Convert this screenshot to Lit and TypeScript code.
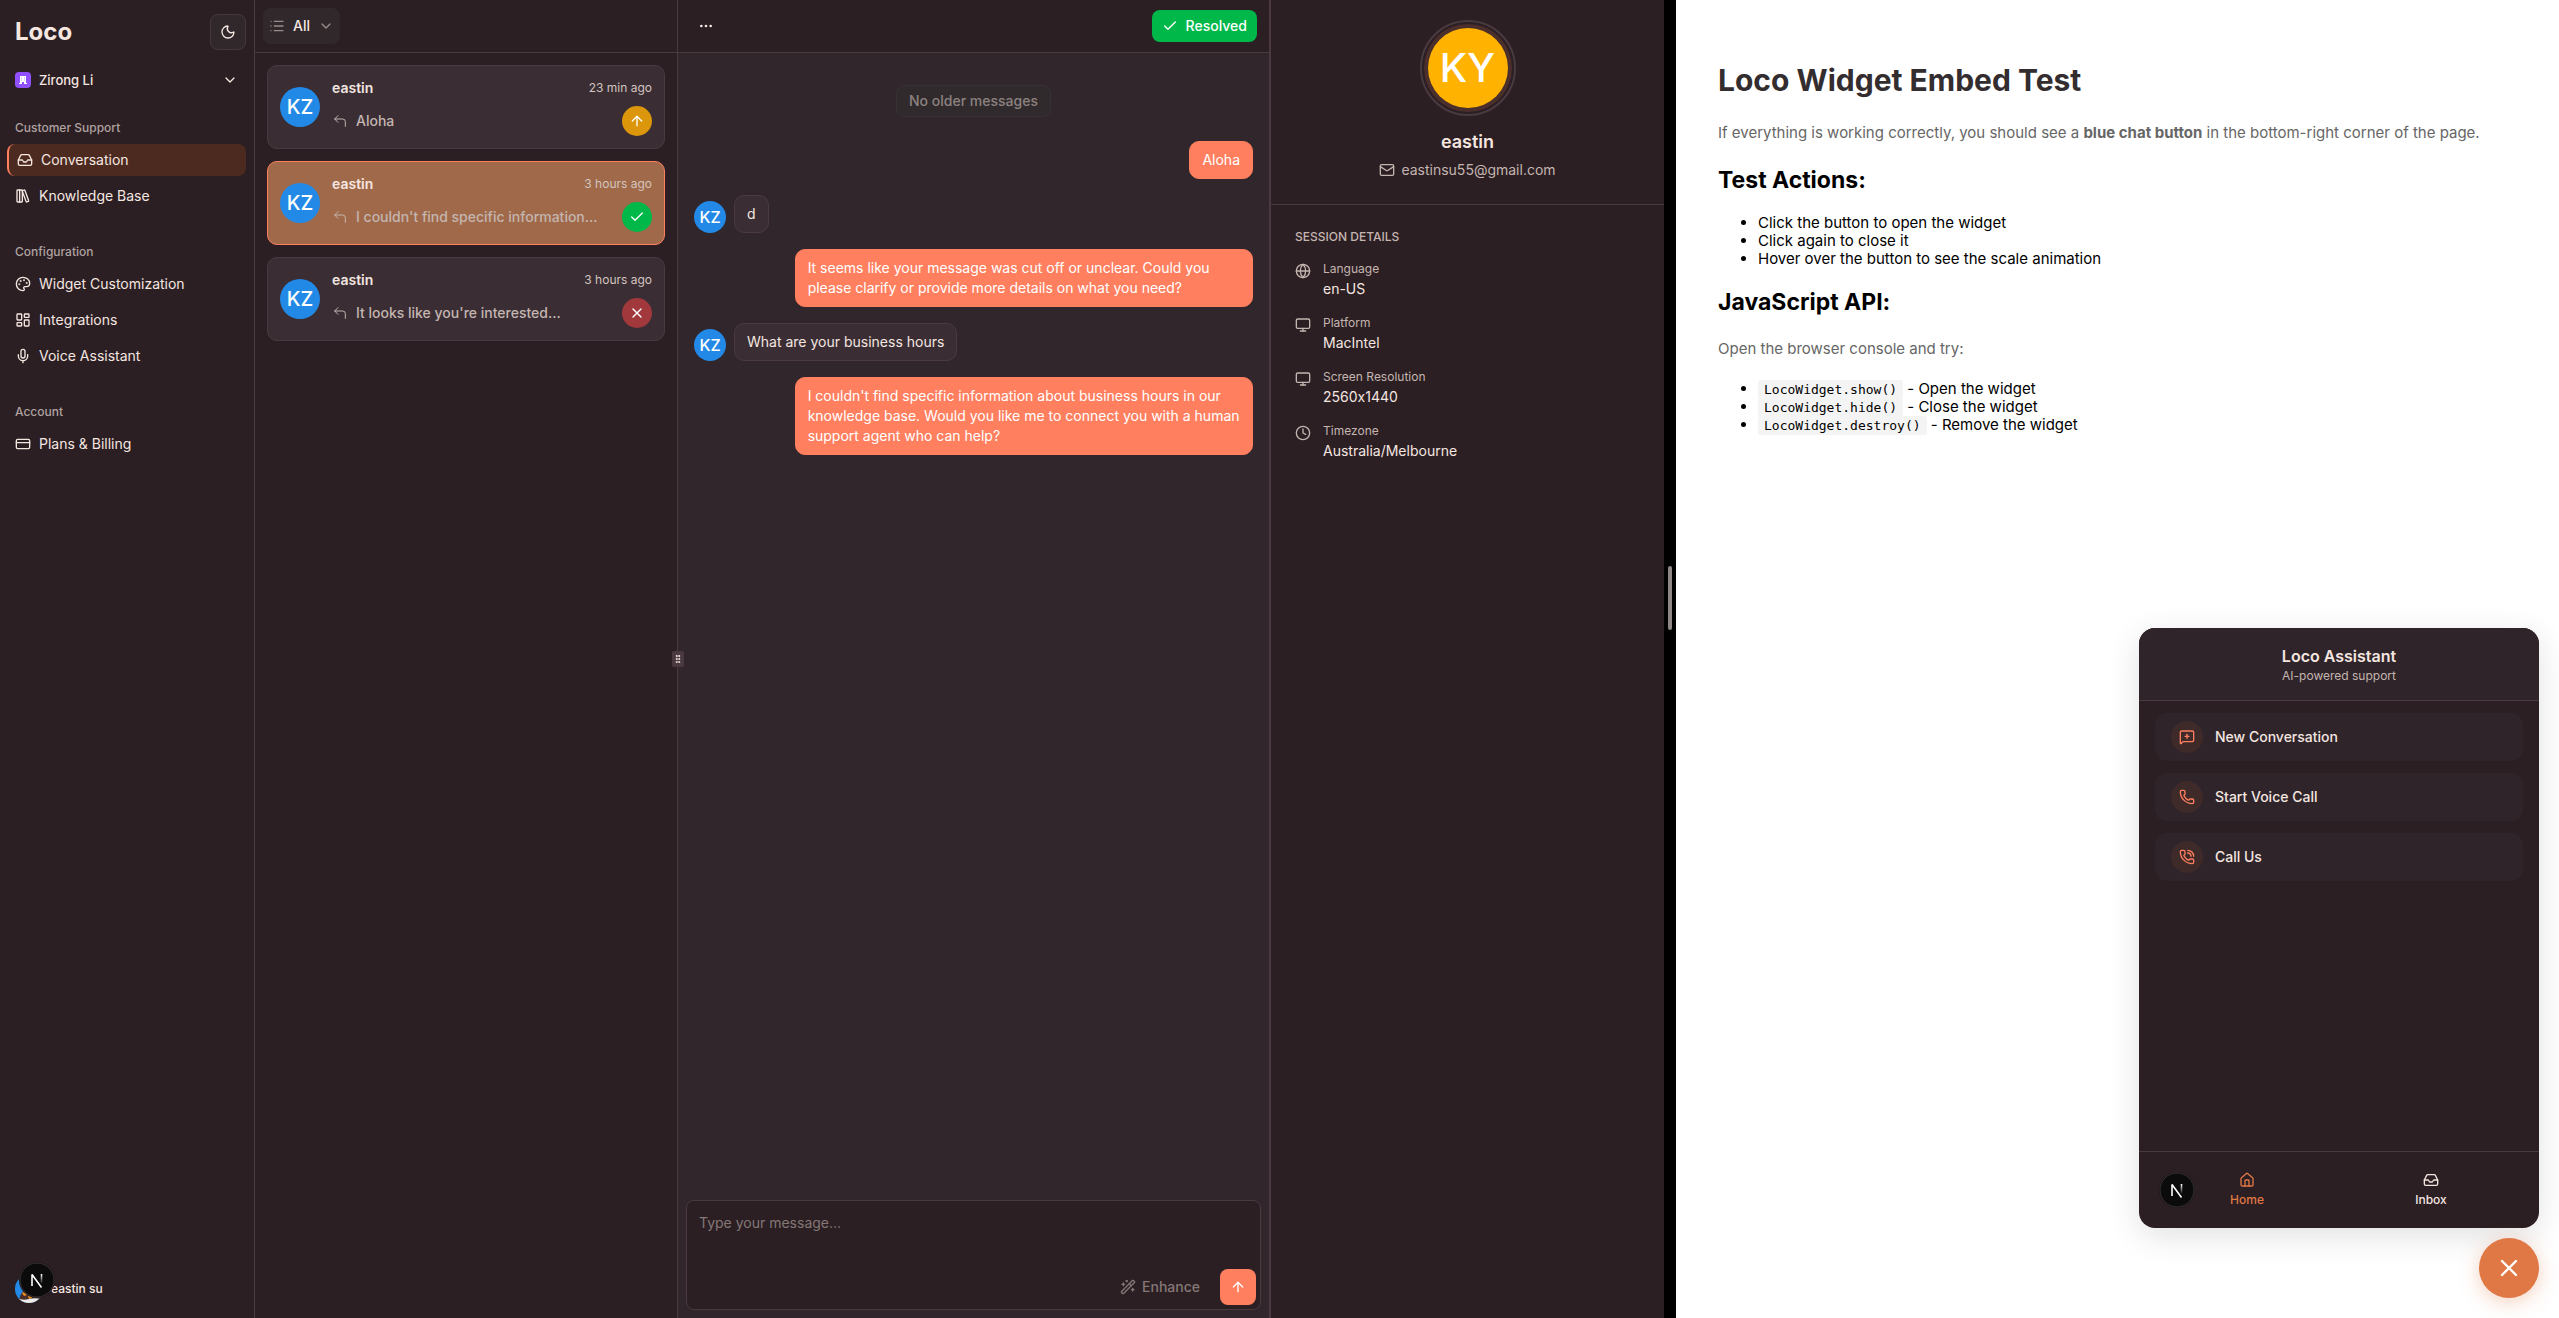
import { LitElement, html, css, svg, nothing } from "lit";
import { customElement, property } from "lit/decorators.js";

const ICONS: Record<string, unknown> = {
  moon: svg`<path d="M20.985 12.486a9 9 0 1 1-9.473-9.472c.405-.022.617.46.402.803a6 6 0 0 0 8.268 8.268c.344-.215.825-.004.803.401"/>`,
  chevron: svg`<path d="m6 9 6 6 6-6"/>`,
  inbox: svg`<path d="M22 12h-6l-2 3h-4l-2-3H2"/><path d="M5.45 5.11 2 12v6a2 2 0 0 0 2 2h16a2 2 0 0 0 2-2v-6l-3.45-6.89A2 2 0 0 0 16.76 4H7.24a2 2 0 0 0-1.79 1.11z"/>`,
  library: svg`<rect width="8" height="18" x="3" y="3" rx="1"/><path d="M7 3v18"/><path d="M20.4 18.9c.2.5-.1 1.1-.6 1.3l-1.9.7c-.5.2-1.1-.1-1.3-.6L11.1 5.1c-.2-.5.1-1.1.6-1.3l1.9-.7c.5-.2 1.1.1 1.3.6Z"/>`,
  palette: svg`<path d="M12 22a1 1 0 0 1 0-20 10 9 0 0 1 10 9 5 5 0 0 1-5 5h-2.25a1.75 1.75 0 0 0-1.4 2.8l.3.4a1.75 1.75 0 0 1-1.4 2.8z"/><circle cx="13.5" cy="6.5" r=".5" fill="currentColor"/><circle cx="17.5" cy="10.5" r=".5" fill="currentColor"/><circle cx="6.5" cy="12.5" r=".5" fill="currentColor"/><circle cx="8.5" cy="7.5" r=".5" fill="currentColor"/>`,
  dashboard: svg`<rect width="7" height="9" x="3" y="3" rx="1"/><rect width="7" height="5" x="14" y="3" rx="1"/><rect width="7" height="9" x="14" y="12" rx="1"/><rect width="7" height="5" x="3" y="16" rx="1"/>`,
  mic: svg`<path d="M12 19v3"/><path d="M19 10v2a7 7 0 0 1-14 0v-2"/><rect x="9" y="2" width="6" height="13" rx="3"/>`,
  card: svg`<rect width="20" height="14" x="2" y="5" rx="2"/><path d="M2 10h20"/>`,
  list: svg`<path d="M3 5h.01M3 12h.01M3 19h.01M8 5h13M8 12h13M8 19h13"/>`,
  reply: svg`<path d="M20 20v-7a4 4 0 0 0-4-4H4"/><path d="M9 14 4 9l5-5"/>`,
  up: svg`<path d="m5 12 7-7 7 7"/><path d="M12 19V5"/>`,
  check: svg`<path d="M20 6 9 17l-5-5"/>`,
  x: svg`<path d="M18 6 6 18"/><path d="m6 6 12 12"/>`,
  dots: svg`<circle cx="12" cy="12" r="1"/><circle cx="19" cy="12" r="1"/><circle cx="5" cy="12" r="1"/>`,
  mail: svg`<path d="m22 7-8.991 5.727a2 2 0 0 1-2.009 0L2 7"/><rect x="2" y="4" width="20" height="16" rx="2"/>`,
  globe: svg`<circle cx="12" cy="12" r="10"/><path d="M12 2a14.5 14.5 0 0 0 0 20 14.5 14.5 0 0 0 0-20"/><path d="M2 12h20"/>`,
  monitor: svg`<rect width="20" height="14" x="2" y="3" rx="2"/><path d="M8 21h8"/><path d="M12 17v4"/>`,
  clock: svg`<circle cx="12" cy="12" r="10"/><path d="M12 6v6l4 2"/>`,
  wand: svg`<path d="m21.64 3.64-1.28-1.28a1.21 1.21 0 0 0-1.72 0L2.36 18.64a1.21 1.21 0 0 0 0 1.72l1.28 1.28a1.2 1.2 0 0 0 1.72 0L21.64 5.36a1.2 1.2 0 0 0 0-1.72"/><path d="m14 7 3 3"/><path d="M5 6v4"/><path d="M19 14v4"/><path d="M10 2v2"/><path d="M7 8H3"/><path d="M21 16h-4"/><path d="M11 3H9"/>`,
  message: svg`<path d="M22 17a2 2 0 0 1-2 2H6.828a2 2 0 0 0-1.414.586l-2.202 2.202A.71.71 0 0 1 2 21.286V5a2 2 0 0 1 2-2h16a2 2 0 0 1 2 2z"/><path d="M12 8v6"/><path d="M9 11h6"/>`,
  phone: svg`<path d="M13.832 16.568a1 1 0 0 0 1.213-.303l.355-.465A2 2 0 0 1 17 15h3a2 2 0 0 1 2 2v3a2 2 0 0 1-2 2A18 18 0 0 1 2 4a2 2 0 0 1 2-2h3a2 2 0 0 1 2 2v3a2 2 0 0 1-.8 1.6l-.468.351a1 1 0 0 0-.292 1.233 14 14 0 0 0 6.392 6.384"/>`,
  phoneCall: svg`<path d="M13 2a9 9 0 0 1 9 9"/><path d="M13 6a5 5 0 0 1 5 5"/><path d="M13.832 16.568a1 1 0 0 0 1.213-.303l.355-.465A2 2 0 0 1 17 15h3a2 2 0 0 1 2 2v3a2 2 0 0 1-2 2A18 18 0 0 1 2 4a2 2 0 0 1 2-2h3a2 2 0 0 1 2 2v3a2 2 0 0 1-.8 1.6l-.468.351a1 1 0 0 0-.292 1.233 14 14 0 0 0 6.392 6.384"/>`,
  home: svg`<path d="M15 21v-8a1 1 0 0 0-1-1h-4a1 1 0 0 0-1 1v8"/><path d="M3 10a2 2 0 0 1 .709-1.528l7-6a2 2 0 0 1 2.582 0l7 6A2 2 0 0 1 21 10v9a2 2 0 0 1-2 2H5a2 2 0 0 1-2-2z"/>`,
  grip: svg`<circle cx="9" cy="12" r="1"/><circle cx="9" cy="5" r="1"/><circle cx="9" cy="19" r="1"/><circle cx="15" cy="12" r="1"/><circle cx="15" cy="5" r="1"/><circle cx="15" cy="19" r="1"/>`,
};

const icon = (name: string, size = 16, stroke = 2) => html`<svg
  class="icon"
  width=${size}
  height=${size}
  viewBox="0 0 24 24"
  fill="none"
  stroke="currentColor"
  stroke-width=${stroke}
  stroke-linecap="round"
  stroke-linejoin="round"
  aria-hidden="true"
>
  ${ICONS[name]}
</svg>`;

const shared = css`
  :host,
  *,
  *::before,
  *::after {
    box-sizing: border-box;
  }
  :host {
    --bg: #2b1f23;
    --surface: #31262c;
    --card: #3a2e34;
    --line: #4a3a40;
    --text: #f5e6e0;
    --muted: #c4b5b0;
    --coral: #ff7f5f;
    --green: #00b849;
    --orange: #e07845;
    font-family: Inter, "Liberation Sans", sans-serif;
    font-variant-ligatures: no-contextual;
    font-size: 14px;
    line-height: 20px;
    color: var(--text);
    min-width: 0;
  }
  .icon {
    display: block;
    flex: none;
  }
  button {
    font: inherit;
    color: inherit;
    border: 0;
    background: none;
    padding: 0;
    margin: 0;
    cursor: pointer;
  }
  a {
    color: inherit;
    text-decoration: none;
  }
  h1,
  h2,
  h3,
  p,
  ul,
  dl,
  dd {
    margin: 0;
    padding: 0;
  }
`;

/** Round avatar with two initials. */
@customElement("initials-avatar")
class InitialsAvatar extends LitElement {
  @property() initials = "";
  @property() size = "md";

  static styles = [
    shared,
    css`
      :host {
        display: block;
        flex: none;
      }
      .disc {
        display: grid;
        place-items: center;
        border-radius: 50%;
        color: #fff;
        background: #2289e6;
        width: 40px;
        height: 40px;
        font-size: 20px;
        font-weight: 500;
      }
      .sm {
        width: 32px;
        height: 32px;
        font-size: 16px;
      }
      .lg {
        width: 80px;
        height: 80px;
        font-size: 40px;
        line-height: 48px;
        font-weight: 500;
        background: #ffb300;
      }
    `,
  ];

  render() {
    return html`<div class="disc ${this.size}">${this.initials}</div>`;
  }
}

/** Round Next.js developer badge. */
@customElement("dev-badge")
class DevBadge extends LitElement {
  static styles = css`
    :host {
      display: block;
      width: 36px;
      height: 36px;
    }
    button {
      display: block;
      padding: 0;
      border: 0;
      border-radius: 50%;
      background: none;
      cursor: pointer;
    }
    svg {
      display: block;
    }
  `;

  render() {
    return html`<button aria-label="Open developer tools">
      <svg width="36" height="36" viewBox="0 0 36 36" fill="none">
        <defs>
          <linearGradient id="fade" x1="0" y1="12" x2="0" y2="22" gradientUnits="userSpaceOnUse">
            <stop stop-color="#fff" />
            <stop offset="1" stop-color="#fff" stop-opacity="0" />
          </linearGradient>
        </defs>
        <circle cx="18" cy="18" r="18" fill="#1a1517" />
        <circle cx="18" cy="18" r="17" fill="#0b0b0b" stroke="#3a3336" />
        <path d="M13 24V12.500L22.500 25.500" stroke="#fff" stroke-width="1.600" stroke-linejoin="bevel" />
        <path d="M22.500 12v9" stroke="url(#fade)" stroke-width="1.600" />
      </svg>
    </button>`;
  }
}

const NAV = [
  {
    label: "Customer Support",
    items: [
      { icon: "inbox", text: "Conversation", active: true },
      { icon: "library", text: "Knowledge Base" },
    ],
  },
  {
    label: "Configuration",
    items: [
      { icon: "palette", text: "Widget Customization" },
      { icon: "dashboard", text: "Integrations" },
      { icon: "mic", text: "Voice Assistant" },
    ],
  },
  { label: "Account", items: [{ icon: "card", text: "Plans & Billing" }] },
] as { label: string; items: { icon: string; text: string; active?: boolean }[] }[];

@customElement("side-nav")
class SideNav extends LitElement {
  static styles = [
    shared,
    css`
      :host {
        display: flex;
        flex-direction: column;
        padding: 14px 8px 11px 7px;
        background: var(--bg);
        border-right: 1px solid var(--line);
      }
      .brand {
        display: flex;
        align-items: center;
        justify-content: space-between;
        padding-left: 8px;
        height: 36px;
        margin-bottom: 14px;
      }
      .name {
        font-size: 24px;
        line-height: 32px;
        font-weight: 700;
      }
      .theme {
        display: grid;
        place-items: center;
        width: 36px;
        height: 36px;
        border: 1px solid #46373d;
        border-radius: 8px;
        background: #31282c;
      }
      .org {
        display: flex;
        align-items: center;
        gap: 8px;
        width: 100%;
        height: 32px;
        padding: 0 8px;
        font-size: 13px;
        font-weight: 500;
        text-align: left;
      }
      .org span {
        flex: 1;
      }
      .logo {
        display: block;
        flex: none;
      }
      nav {
        padding-top: 8px;
        flex: 1;
      }
      .group {
        padding: 8px 0;
      }
      .group + .group {
        margin-top: 8px;
      }
      .label {
        height: 32px;
        line-height: 32px;
        padding-left: 8px;
        font-size: 12px;
        font-weight: 500;
        color: #b0a2a1;
      }
      ul {
        list-style: none;
        display: grid;
        gap: 4px;
      }
      .item {
        display: flex;
        align-items: center;
        gap: 8px;
        height: 32px;
        padding: 0 8px;
        border-radius: 8px;
      }
      .active {
        background: #4c2a1f;
        border-left: 2px solid var(--coral);
      }
      .user {
        display: flex;
        align-items: center;
        gap: 8px;
        padding: 0 8px;
        height: 36px;
        font-size: 12px;
        font-weight: 500;
        position: relative;
        text-align: left;
      }
      dev-badge {
        position: absolute;
        left: 12px;
        top: -9px;
      }
    `,
  ];

  render() {
    return html`
      <div class="brand">
        <span class="name">Loco</span>
        <button class="theme" aria-label="Switch theme">${icon("moon")}</button>
      </div>
      <button class="org">
        <svg class="logo" width="16" height="16" viewBox="0 0 16 16">
          <rect width="16" height="16" rx="4" fill="#9050ff" />
          <path d="M5 4h6v7h1v1H9v-2H7v2H4v-1h1z" fill="#fff" />
          <path d="M6 5.500h1v1H6zM9 5.500h1v1H9zM6 7.500h1v1H6zM9 7.500h1v1H9z" fill="#c3a2ff" />
        </svg>
        <span>Zirong Li</span>
        ${icon("chevron")}
      </button>
      <nav>
        ${NAV.map(
          (g) => html`<div class="group">
            <div class="label">${g.label}</div>
            <ul>
              ${g.items.map(
                (i) => html`<li>
                  <a href="#" class="item ${i.active ? "active" : ""}" aria-current=${i.active ? "page" : nothing}
                    >${icon(i.icon)}<span>${i.text}</span></a
                  >
                </li>`
              )}
            </ul>
          </div>`
        )}
      </nav>
      <div class="user">
        <svg class="logo" width="28" height="28" viewBox="0 0 28 28">
          <defs><clipPath id="round"><circle cx="14" cy="14" r="14" /></clipPath></defs>
          <g clip-path="url(#round)">
            <rect width="28" height="28" fill="#2289e6" />
            <path d="M4 28c0-8 4-14 10-14s12 6 12 14z" fill="#4a2f2a" />
            <path d="M7 18l4-2 1 4-3 1zM13 21l3-1 1 3-3 1z" fill="#f09020" />
            <path d="M2 23c4 2 8 2 12 1s8-1 12 0v5H2z" fill="#eceaea" />
          </g>
        </svg>
        <span>eastin su</span>
        <dev-badge></dev-badge>
      </div>
    `;
  }
}

const THREADS = [
  { time: "23 min ago", text: "Aloha", state: "up", active: false },
  { time: "3 hours ago", text: "I couldn't find specific information…", state: "check", active: true },
  { time: "3 hours ago", text: "It looks like you're interested…", state: "x", active: false },
];

@customElement("thread-list")
class ThreadList extends LitElement {
  static styles = [
    shared,
    css`
      :host {
        display: flex;
        flex-direction: column;
        background: var(--bg);
      }
      header {
        display: flex;
        align-items: center;
        height: 53px;
        flex: none;
        padding: 0 8px;
        border-bottom: 1px solid var(--line);
      }
      .filter {
        display: flex;
        align-items: center;
        height: 36px;
        padding: 0 6px;
        border-radius: 8px;
        background: #31282c;
        font-weight: 500;
      }
      .filter span {
        margin: 0 8px;
      }
      .filter .icon {
        color: #9a8c8a;
      }
      .cards {
        list-style: none;
        display: grid;
        gap: 12px;
        padding: 12px;
      }
      .card {
        display: grid;
        grid-template-columns: 40px minmax(0, 1fr);
        align-items: center;
        gap: 12px;
        height: 84px;
        width: 100%;
        padding: 0 12px;
        border: 1px solid var(--line);
        border-radius: 10px;
        background: var(--card);
        text-align: left;
      }
      .active {
        background: #a06a4a;
        border-color: var(--coral);
      }
      .row {
        display: flex;
        align-items: center;
        gap: 8px;
      }
      .top {
        justify-content: space-between;
        height: 20px;
        margin-bottom: 8px;
      }
      .who {
        font-weight: 600;
      }
      .time {
        font-size: 12px;
        color: #d2c4bf;
      }
      .text {
        flex: 1;
        font-weight: 500;
        color: var(--muted);
        white-space: nowrap;
        overflow: hidden;
        text-overflow: ellipsis;
      }
      .row .icon {
        color: #c4b5b0;
      }
      .state {
        display: grid;
        place-items: center;
        width: 30px;
        height: 30px;
        border-radius: 50%;
      }
      .row .state .icon {
        color: #fff;
      }
      .up {
        background: #dc960c;
      }
      .check {
        background: var(--green);
      }
      .x {
        background: #a0383c;
      }
    `,
  ];

  render() {
    return html`
      <header>
        <button class="filter" aria-haspopup="listbox">${icon("list")}<span>All</span>${icon("chevron")}</button>
      </header>
      <ul class="cards">
        ${THREADS.map(
          (t) => html`<li>
            <button class="card ${t.active ? "active" : ""}">
              <initials-avatar initials="KZ"></initials-avatar>
              <div>
                <div class="row top"><span class="who">eastin</span><span class="time">${t.time}</span></div>
                <div class="row">
                  ${icon("reply", 16, 1.5)}<span class="text">${t.text}</span>
                  <span class="state ${t.state}">${icon(t.state)}</span>
                </div>
              </div>
            </button>
          </li>`
        )}
      </ul>
    `;
  }
}

const MESSAGES = [
  { mine: true, text: "Aloha" },
  { mine: false, text: "d" },
  {
    mine: true,
    text: "It seems like your message was cut off or unclear. Could you please clarify or provide more details on what you need?",
  },
  { mine: false, text: "What are your business hours" },
  {
    mine: true,
    text: "I couldn't find specific information about business hours in our knowledge base. Would you like me to connect you with a human support agent who can help?",
  },
];

@customElement("chat-pane")
class ChatPane extends LitElement {
  static styles = [
    shared,
    css`
      :host {
        display: flex;
        flex-direction: column;
        background: var(--surface);
        border-left: 1px solid var(--line);
        border-right: 1px solid var(--line);
        position: relative;
      }
      header {
        display: flex;
        align-items: center;
        justify-content: space-between;
        height: 53px;
        flex: none;
        padding: 0 12px 0 20px;
        background: var(--bg);
        border-bottom: 1px solid var(--line);
      }
      .resolved {
        display: flex;
        align-items: center;
        gap: 8px;
        height: 32px;
        padding: 0 10px;
        border-radius: 8px;
        background: var(--green);
        color: #fff;
        font-weight: 500;
      }
      .log {
        flex: 1;
        display: flex;
        flex-direction: column;
        align-items: flex-start;
        gap: 16px;
        padding: 32px 16px 16px;
      }
      .older {
        align-self: center;
        height: 32px;
        padding: 0 12px;
        margin-bottom: 8px;
        border: 1px solid #393035;
        border-radius: 8px;
        background: #302a2c;
        color: #8d8280;
        font-weight: 500;
      }
      .msg {
        display: flex;
        align-items: flex-end;
        gap: 8px;
        max-width: 82%;
      }
      .mine {
        align-self: flex-end;
      }
      .bubble {
        padding: 8px 12px;
        border: 1px solid var(--line);
        border-radius: 10px;
        background: var(--card);
      }
      .mine .bubble {
        background: var(--coral);
        border-color: var(--coral);
        color: #fff;
      }
      .composer {
        display: flex;
        flex-direction: column;
        height: 110px;
        margin: 8px;
        border: 1px solid var(--line);
        border-radius: 8px;
        background: var(--bg);
      }
      textarea {
        flex: 1;
        resize: none;
        border: 0;
        outline: 0;
        background: none;
        color: inherit;
        font: inherit;
        padding: 12px 12px 0;
      }
      textarea::placeholder {
        color: #857776;
        opacity: 1;
      }
      .tools {
        display: flex;
        align-items: center;
        justify-content: flex-end;
        gap: 20px;
        padding: 4px;
      }
      .enhance {
        display: flex;
        align-items: center;
        gap: 6px;
        color: #857776;
        font-weight: 500;
      }
      .send {
        display: grid;
        place-items: center;
        width: 36px;
        height: 36px;
        border-radius: 8px;
        background: var(--coral);
        color: #fff;
      }
      .grip {
        position: absolute;
        left: -6px;
        top: calc(50% - 8px);
        display: grid;
        place-items: center;
        width: 12px;
        height: 16px;
        border-radius: 2px;
        background: var(--line);
      }
    `,
  ];

  render() {
    return html`
      <header>
        <button aria-label="More actions">${icon("dots")}</button>
        <button class="resolved">${icon("check")}Resolved</button>
      </header>
      <div class="log">
        <button class="older" disabled>No older messages</button>
        ${MESSAGES.map(
          (m) => html`<div class="msg ${m.mine ? "mine" : ""}">
            ${m.mine ? nothing : html`<initials-avatar initials="KZ" size="sm"></initials-avatar>`}
            <div class="bubble">${m.text}</div>
          </div>`
        )}
      </div>
      <form class="composer">
        <textarea aria-label="Message" placeholder="Type your message…"></textarea>
        <div class="tools">
          <button type="button" class="enhance">${icon("wand")}Enhance</button>
          <button type="button" class="send" aria-label="Send">${icon("up")}</button>
        </div>
      </form>
      <div class="grip">${icon("grip", 10, 3)}</div>
    `;
  }
}

const DETAILS = [
  ["globe", "Language", "en-US"],
  ["monitor", "Platform", "MacIntel"],
  ["monitor", "Screen Resolution", "2560x1440"],
  ["clock", "Timezone", "Australia/Melbourne"],
];

@customElement("contact-panel")
class ContactPanel extends LitElement {
  static styles = [
    shared,
    css`
      :host {
        display: block;
        background: var(--bg);
        border-left: 1px solid var(--line);
      }
      .profile {
        display: flex;
        flex-direction: column;
        align-items: center;
        height: 205px;
        padding-top: 20px;
        border-bottom: 1px solid var(--line);
      }
      .ring {
        width: 96px;
        height: 96px;
        padding: 2px;
        border: 2px solid var(--line);
        border-radius: 50%;
        margin-bottom: 12px;
      }
      .glow {
        padding: 4px;
        border-radius: 50%;
        background: #4b2f2d;
      }
      h2 {
        font-size: 18px;
        line-height: 28px;
        font-weight: 600;
        margin-bottom: 4px;
      }
      .mail {
        display: flex;
        align-items: center;
        gap: 6px;
        color: var(--muted);
      }
      .session {
        padding: 24px;
      }
      h3 {
        font-size: 12px;
        line-height: 16px;
        font-weight: 500;
        text-transform: uppercase;
        color: var(--muted);
        margin-bottom: 16px;
      }
      dl {
        display: grid;
        gap: 16px;
      }
      .entry {
        display: grid;
        grid-template-columns: 16px 1fr;
        column-gap: 12px;
        row-gap: 2px;
      }
      .entry .icon {
        grid-row: span 2;
        margin-top: 2px;
        color: var(--muted);
      }
      dt {
        font-size: 12px;
        line-height: 16px;
        color: var(--muted);
      }
    `,
  ];

  render() {
    return html`
      <div class="profile">
        <div class="ring">
          <div class="glow"><initials-avatar initials="KY" size="lg"></initials-avatar></div>
        </div>
        <h2>eastin</h2>
        <a class="mail" href="mailto:eastinsu55@gmail.com">${icon("mail")}eastinsu55@gmail.com</a>
      </div>
      <div class="session">
        <h3>Session details</h3>
        <dl>
          ${DETAILS.map(
            ([i, k, v]) => html`<div class="entry">
              ${icon(i)}
              <dt>${k}</dt>
              <dd>${v}</dd>
            </div>`
          )}
        </dl>
      </div>
    `;
  }
}

@customElement("chat-widget")
class ChatWidget extends LitElement {
  static styles = [
    shared,
    css`
      :host {
        display: flex;
        flex-direction: column;
        align-items: flex-end;
        gap: 10px;
      }
      .window {
        display: flex;
        flex-direction: column;
        width: 400px;
        height: 600px;
        border-radius: 16px;
        overflow: hidden;
        background: var(--bg);
        box-shadow: 0 8px 32px rgba(0, 0, 0, 0.12);
      }
      header {
        height: 73px;
        flex: none;
        padding-top: 16px;
        text-align: center;
        background: #2f242a;
        border-bottom: 1px solid var(--line);
      }
      h2 {
        font-size: 16px;
        line-height: 24px;
        font-weight: 600;
      }
      header p {
        font-size: 12px;
        line-height: 16px;
        color: var(--muted);
      }
      .actions {
        flex: 1;
        display: flex;
        flex-direction: column;
        gap: 12px;
        padding: 12px 16px;
      }
      .action {
        display: flex;
        align-items: center;
        gap: 12px;
        height: 48px;
        padding: 0 16px;
        border-radius: 12px;
        background: #2f242a;
        font-weight: 500;
      }
      .disc {
        display: grid;
        place-items: center;
        width: 32px;
        height: 32px;
        border-radius: 50%;
        background: #3f2a2a;
        color: var(--coral);
      }
      nav {
        position: relative;
        display: grid;
        grid-template-columns: 1fr 1fr;
        height: 77px;
        padding: 20px 16px;
        border-top: 1px solid var(--line);
      }
      .tab {
        display: flex;
        flex-direction: column;
        align-items: center;
        gap: 4px;
        font-size: 12px;
        line-height: 16px;
        font-weight: 500;
      }
      .tab:first-child {
        color: var(--orange);
      }
      dev-badge {
        position: absolute;
        left: 20px;
        top: 20px;
      }
      .fab {
        display: grid;
        place-items: center;
        width: 60px;
        height: 60px;
        border-radius: 50%;
        background: var(--orange);
        color: #fff;
        box-shadow: 0 4px 20px rgba(224, 120, 69, 0.35);
      }
    `,
  ];

  render() {
    return html`
      <section class="window">
        <header>
          <h2>Loco Assistant</h2>
          <p>AI-powered support</p>
        </header>
        <div class="actions">
          <button class="action"><span class="disc">${icon("message")}</span>New Conversation</button>
          <button class="action"><span class="disc">${icon("phone")}</span>Start Voice Call</button>
          <button class="action"><span class="disc">${icon("phoneCall")}</span>Call Us</button>
        </div>
        <nav>
          <button class="tab">${icon("home")}Home</button>
          <button class="tab">${icon("inbox")}Inbox</button>
          <dev-badge></dev-badge>
        </nav>
      </section>
      <button class="fab" aria-label="Close chat">${icon("x", 28)}</button>
    `;
  }
}

@customElement("embed-page")
class EmbedPage extends LitElement {
  static styles = [
    shared,
    css`
      :host {
        display: block;
        padding: 60px 42px;
        position: relative;
        background: #fff;
        color: #000;
        font-size: 15px;
        line-height: 18px;
      }
      h1 {
        font-size: 30px;
        line-height: 40px;
        font-weight: 700;
        color: #332d2f;
        margin-bottom: 20px;
      }
      p {
        line-height: 26px;
        color: #666;
      }
      h2 {
        font-size: 23px;
        line-height: 28px;
        font-weight: 700;
        margin: 20px 0;
      }
      ul {
        padding-left: 40px;
      }
      h2 + p {
        margin-bottom: 18px;
      }
      code {
        font-family: "DejaVu Sans Mono", "Liberation Mono", monospace;
        font-size: 13px;
        line-height: 1;
        padding: 2px 6px;
        border-radius: 3px;
        background: #f4f4f4;
      }
      chat-widget {
        position: absolute;
        right: 20px;
        bottom: 20px;
      }
    `,
  ];

  render() {
    return html`
      <h1>Loco Widget Embed Test</h1>
      <p>
        If everything is working correctly, you should see a <strong>blue chat button</strong> in the bottom-right
        corner of the page.
      </p>
      <h2>Test Actions:</h2>
      <ul>
        <li>Click the button to open the widget</li>
        <li>Click again to close it</li>
        <li>Hover over the button to see the scale animation</li>
      </ul>
      <h2>JavaScript API:</h2>
      <p>Open the browser console and try:</p>
      <ul>
        <li><code>LocoWidget.show()</code> - Open the widget</li>
        <li><code>LocoWidget.hide()</code> - Close the widget</li>
        <li><code>LocoWidget.destroy()</code> - Remove the widget</li>
      </ul>
      <chat-widget></chat-widget>
    `;
  }
}

@customElement("app-root")
class AppRoot extends LitElement {
  static styles = css`
    :host {
      display: grid;
      grid-template-columns: 255px 422fr 593fr 394fr 12px 883fr;
      min-height: 100vh;
      background: #fff;
    }
    .split {
      display: grid;
      place-items: center;
      padding-bottom: 122px;
      background: #000;
    }
    .split::after {
      content: "";
      width: 4px;
      height: 64px;
      border-radius: 2px;
      background: #8f8785;
    }
  `;

  render() {
    return html`
      <side-nav></side-nav>
      <thread-list></thread-list>
      <chat-pane></chat-pane>
      <contact-panel></contact-panel>
      <div class="split" role="separator"></div>
      <embed-page></embed-page>
    `;
  }
}
